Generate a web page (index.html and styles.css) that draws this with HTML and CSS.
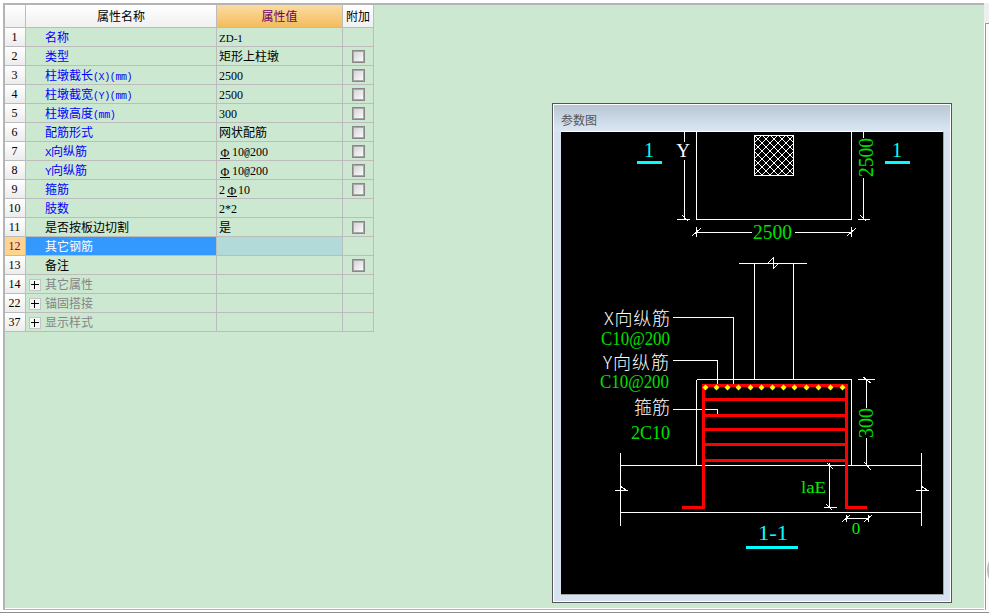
FILE: index.html
```html
<!DOCTYPE html>
<html lang="zh-CN">
<head>
<meta charset="utf-8">
<title>参数图</title>
<link rel="stylesheet" href="styles.css">
</head>
<body>
<div class="page">
  <div class="main">
    <div class="frame">
      <table class="props">
        <colgroup><col class="c-num"><col class="c-name"><col class="c-val"><col class="c-add"></colgroup>
        <thead>
          <tr><th class="h-num"></th><th>属性名称</th><th class="h-val">属性值</th><th>附加</th></tr>
        </thead>
        <tbody>
          <tr><td class="num">1</td><td class="name blue">名称</td><td class="val"><span class="lat sm">ZD-1</span></td><td></td></tr>
          <tr><td class="num">2</td><td class="name blue">类型</td><td class="val">矩形上柱墩</td><td class="add"><span class="chk"></span></td></tr>
          <tr><td class="num">3</td><td class="name blue">柱墩截长<span class="mono">(X)(mm)</span></td><td class="val"><span class="lat">2500</span></td><td class="add"><span class="chk"></span></td></tr>
          <tr><td class="num">4</td><td class="name blue">柱墩截宽<span class="mono">(Y)(mm)</span></td><td class="val"><span class="lat">2500</span></td><td class="add"><span class="chk"></span></td></tr>
          <tr><td class="num">5</td><td class="name blue">柱墩高度<span class="mono">(mm)</span></td><td class="val"><span class="lat">300</span></td><td class="add"><span class="chk"></span></td></tr>
          <tr><td class="num">6</td><td class="name blue">配筋形式</td><td class="val">网状配筋</td><td class="add"><span class="chk"></span></td></tr>
          <tr><td class="num">7</td><td class="name blue"><span class="mono cap">X</span>向纵筋</td><td class="val"><span class="lat"><span class="steel lead">Φ</span>10<span class="at">@</span>200</span></td><td class="add"><span class="chk"></span></td></tr>
          <tr><td class="num">8</td><td class="name blue"><span class="mono cap">Y</span>向纵筋</td><td class="val"><span class="lat"><span class="steel lead">Φ</span>10<span class="at">@</span>200</span></td><td class="add"><span class="chk"></span></td></tr>
          <tr><td class="num">9</td><td class="name blue">箍筋</td><td class="val"><span class="lat">2<span class="steel">Φ</span>10</span></td><td class="add"><span class="chk"></span></td></tr>
          <tr><td class="num">10</td><td class="name blue">肢数</td><td class="val"><span class="lat">2*2</span></td><td></td></tr>
          <tr><td class="num">11</td><td class="name">是否按板边切割</td><td class="val">是</td><td class="add"><span class="chk"></span></td></tr>
          <tr class="sel"><td class="num">12</td><td class="name">其它钢筋</td><td class="val"></td><td></td></tr>
          <tr><td class="num">13</td><td class="name">备注</td><td class="val"></td><td class="add"><span class="chk"></span></td></tr>
          <tr><td class="num">14</td><td class="name gray"><span class="exp"></span>其它属性</td><td></td><td></td></tr>
          <tr><td class="num">22</td><td class="name gray"><span class="exp"></span>锚固搭接</td><td></td><td></td></tr>
          <tr><td class="num">37</td><td class="name gray"><span class="exp"></span>显示样式</td><td></td><td></td></tr>
        </tbody>
      </table>

      <section class="panel">
        <div class="panel-title">参数图</div>
        <div class="panel-body">
          <div class="stage">
            <svg class="drawing" width="382" height="462" viewBox="561 132 382 462" xmlns="http://www.w3.org/2000/svg">
              <defs>
                <pattern id="hatch" patternUnits="userSpaceOnUse" x="754" y="135" width="8" height="8">
                  <path class="hl" d="M0 0L8 8M8 0L0 8"/>
                </pattern>
              </defs>

              <!-- plan -->
              <path class="w" d="M696.5 132V219.5H851.5V132"/>
              <rect class="hatch" x="754.5" y="135.5" width="39" height="40"/>
              <path class="w" d="M684.5 132V142M684.5 160V219.5M677 219.5H690M682 215L688 221"/>
              <path class="w" d="M863.5 132V138M863.5 178V219.5M858 219.5H870M860 215L866 221"/>
              <path class="w" d="M696.5 227V237M851.5 227V237M692 236L701 228M847 236L856 228M696.5 232.5H752M795 232.5H851.5"/>
              <text class="t-cyan" x="649" y="157" text-anchor="middle">1</text>
              <rect class="cyan" x="637" y="161" width="25" height="3"/>
              <text class="t-white t-lg" x="683" y="157" text-anchor="middle">Y</text>
              <text class="t-cyan" x="897" y="157" text-anchor="middle">1</text>
              <rect class="cyan" x="885" y="161" width="25" height="3"/>
              <text class="t-green" x="753" y="239" textLength="39" lengthAdjust="spacingAndGlyphs">2500</text>
              <text class="t-green" transform="translate(873 177) rotate(-90)" textLength="39" lengthAdjust="spacingAndGlyphs">2500</text>

              <!-- section: column -->
              <path class="w" d="M739 263.5H807M754.5 263.5V379.5M793.5 263.5V379.5"/>
              <path class="w" d="M768 263L773 258V269L778 264"/>
              <!-- footing -->
              <path class="w" d="M696.5 379.5H851.5V465.5M696.5 379.5V465.5"/>
              <path class="w" d="M620.5 465.5H921.5M620.5 512.5H921.5M620.5 453V526M921.5 453V526"/>
              <path class="w" d="M615 490H626L620 486V493M916 490H927L921 486V493"/>

              <!-- leaders -->
              <path class="w" d="M673 317.5H733.5V386M673 360.5H717.5V386M673 409.5H717.5V415"/>

              <!-- rebar -->
              <path class="red" d="M682 507.5H703.5V385.5H846.5V507.5H867"/>
              <path class="red-thin" d="M703 399.5H846M703 415.5H846M703 429.5H846M703 444.5H846M703 460.5H846"/>
              <g class="dots">
                <path d="M705.5 384.5l3 3l-3 3l-3-3z"/><path d="M716.5 384.5l3 3l-3 3l-3-3z"/><path d="M727.5 384.5l3 3l-3 3l-3-3z"/><path d="M738.5 384.5l3 3l-3 3l-3-3z"/><path d="M750.5 384.5l3 3l-3 3l-3-3z"/><path d="M761.5 384.5l3 3l-3 3l-3-3z"/><path d="M772.5 384.5l3 3l-3 3l-3-3z"/><path d="M783.5 384.5l3 3l-3 3l-3-3z"/><path d="M794.5 384.5l3 3l-3 3l-3-3z"/><path d="M806.5 384.5l3 3l-3 3l-3-3z"/><path d="M818.5 384.5l3 3l-3 3l-3-3z"/><path d="M830.5 384.5l3 3l-3 3l-3-3z"/><path d="M842.5 384.5l3 3l-3 3l-3-3z"/>
              </g>

              <!-- dims -->
              <path class="w" d="M858 379.5H875M866.5 379.5V408M866.5 438V465.5M863 377L871 383M864 462L871 470"/>
              <path class="w" d="M829.5 463V507.5M824 507.5H837M827 463L833 469M826 504L832 510"/>
              <path class="w" d="M846 518.5H868M846 515V522M868 515V522M842 522L850 515M864 522L872 515"/>

              <!-- labels -->
              <text class="t-white t-cn" x="604" y="325" textLength="66">X向纵筋</text>
              <text class="t-green t-md" x="601" y="345" textLength="69" lengthAdjust="spacingAndGlyphs">C10@200</text>
              <text class="t-white t-cn" x="603" y="369" textLength="66">Y向纵筋</text>
              <text class="t-green t-md" x="600" y="388" textLength="69" lengthAdjust="spacingAndGlyphs">C10@200</text>
              <text class="t-white t-cn" x="634" y="414">箍筋</text>
              <text class="t-green t-md" x="631" y="439" textLength="39" lengthAdjust="spacingAndGlyphs">2C10</text>
              <text class="t-green" transform="translate(873 438) rotate(-90)" textLength="30" lengthAdjust="spacingAndGlyphs">300</text>
              <text class="t-lime" x="801" y="493" textLength="25" lengthAdjust="spacingAndGlyphs">laE</text>
              <text class="t-lime" x="856" y="534" text-anchor="middle">0</text>
              <text class="t-cyan" x="758" y="540" textLength="30" lengthAdjust="spacingAndGlyphs">1-1</text>
              <rect class="cyan" x="746" y="546" width="52" height="3"/>
            </svg>
          </div>
        </div>
      </section>
    </div>
    <aside class="side"><div class="side-top"></div><div class="side-body"><span class="knob"></span></div></aside>
  </div>
  <div class="foot"></div>
</div>
</body>
</html>
```

FILE: styles.css
```css
* { box-sizing: border-box; }
html, body { margin: 0; padding: 0; background: #fff; }
body { font-family: "Noto Sans CJK SC", "Liberation Serif", sans-serif; font-size: 12px; }

.page { width: 989px; height: 613px; display: flex; flex-direction: column; overflow: hidden; }
.main { height: 610px; display: flex; padding: 3px 0 0 3px; }

.frame {
  flex: none;
  width: 981px;
  display: flex;
  align-items: flex-start;
  background: #cde8d0;
  border-top: 2px solid #b4b4b4;
  border-left: 2px solid #b4b4b4;
  border-bottom: 1px solid #b4b4b4;
  box-shadow: inset 0 -1px 0 #fff;
}

.side { flex: 1; min-width: 0; overflow: hidden; display: flex; flex-direction: column; }
.side-top { height: 20px; background: #efefef; }
.side-body { flex: 1; margin-left: 1px; border-left: 1px solid #9a9a9a; border-top: 1px solid #9a9a9a; background: #fafafa; padding: 536px 0 0 1px; }
.knob { display: block; width: 8px; height: 20px; border-radius: 50%; background: #bdbdbd; }
.foot { flex: 1; border-bottom: 1px solid #8e8e8e; background: #fff; }

/* property grid */
.props { table-layout: fixed; width: 369px; border-collapse: separate; border-spacing: 0; flex: none; }
.c-num { width: 21px; }
.c-name { width: 191px; }
.c-val { width: 126px; }
.c-add { width: 31px; }

.props th, .props td {
  padding: 0;
  border-right: 1px solid #bcbcbc;
  border-bottom: 1px solid #bcbcbc;
  white-space: nowrap;
  overflow: hidden;
  line-height: 18px;
}
.props th {
  height: 23px;
  font-weight: 400;
  color: #000;
  background: linear-gradient(#ffffff, #f0f0f0);
  text-align: center;
}
.props .h-val { color: #6a0066; background: linear-gradient(#fcdca2, #f3bc5d); }
.props td { height: 19px; color: #000; }
.props .num {
  text-align: center;
  font-family: "Liberation Serif", serif;
  font-size: 12px;
  background: linear-gradient(#ffffff, #ececec);
  padding-right: 1px;
}
.props td.name { padding-left: 19px; }
.props td.val { padding-left: 2px; }
.props td.blue { color: #0000ff; }
.props td.gray { color: #858585; }
.props td.add { text-align: center; line-height: 0; }

.lat { font-family: "Liberation Serif", serif; font-size: 12px; line-height: 1; }
.sm { font-size: 11px; }
.mono { font-family: "Liberation Mono", monospace; font-size: 10px; letter-spacing: -0.4px; line-height: 1; }
.cap { font-size: 11px; letter-spacing: -0.6px; }
.at { font-family: "Liberation Mono", monospace; font-size: 10px; line-height: 1; }
.steel { display: inline-block; width: 10px; margin: 0 1px 0 2px; font-size: 12px; line-height: 9px; text-align: center; border-bottom: 1px solid #000; vertical-align: -1px; }
.lead { margin-left: 1px; margin-right: 2px; }

.props .sel .num { background: #ffd48c; color: #800050; }
.props .sel .name { background: #3399ff; color: #fff; }
.props .sel .val { background: #b2dad8; }

.chk {
  display: inline-block;
  width: 13px;
  height: 13px;
  vertical-align: middle;
  border: 1px solid #888;
  box-shadow: inset 0 0 0 1px #a8a8a8;
  background: linear-gradient(135deg, #d0d0d0, #ffffff);
}
.exp {
  position: relative;
  display: inline-block;
  width: 12px;
  height: 12px;
  margin-left: -16px;
  margin-right: 4px;
  vertical-align: -2px;
  border: 1px solid #c4c4c4;
  background: #f6f6f6;
}
.exp::before { content: ""; position: absolute; left: 1px; top: 4px; width: 8px; height: 1px; background: #000; }
.exp::after { content: ""; position: absolute; left: 4px; top: 1px; width: 1px; height: 8px; background: #000; }

/* parameter diagram */
.panel {
  flex: none;
  width: 400px;
  height: 500px;
  margin: 98px 32px 0 auto;
  padding: 1px;
  border: 1px solid #555;
  background: #d6e2f0;
  box-shadow: inset 0 0 0 1px #fff;
}
.panel-title {
  height: 26px;
  padding-left: 7px;
  line-height: 29px;
  color: #555;
  background: linear-gradient(#b8c7d4, #dbe6f3);
}
.panel-body { padding: 0 6px 0 7px; }
.stage { width: 383px; border-top: 1px solid #fff; border-right: 1px solid #a4a4a4; border-bottom: 1px solid #a4a4a4; background: #000; }
.drawing { display: block; }

.w { fill: none; stroke: #fff; stroke-width: 1; shape-rendering: crispEdges; }
.hl { fill: none; stroke: #fff; stroke-width: 1; }
.hatch { fill: url(#hatch); stroke: #fff; stroke-width: 1; shape-rendering: crispEdges; }
.cyan { fill: #00ffff; }
.red { fill: none; stroke: #ff0000; stroke-width: 3; }
.red-thin { fill: none; stroke: #ff0000; stroke-width: 3; shape-rendering: crispEdges; }
.dots path { fill: #ffff00; }

.drawing text { font-family: "Liberation Serif", "Noto Sans CJK SC", serif; }
.t-green { fill: #00e000; font-size: 20px; }
.t-md { font-size: 19px; }
.t-lime { fill: #00f000; font-size: 17px; }
.t-cyan { fill: #00ffff; font-size: 20px; }
.t-white { fill: #fff; }
.t-lg { font-size: 19px; }
.drawing .t-cn { font-size: 18px; font-family: "Noto Sans CJK SC", "Liberation Serif", sans-serif; font-weight: 300; }
```
